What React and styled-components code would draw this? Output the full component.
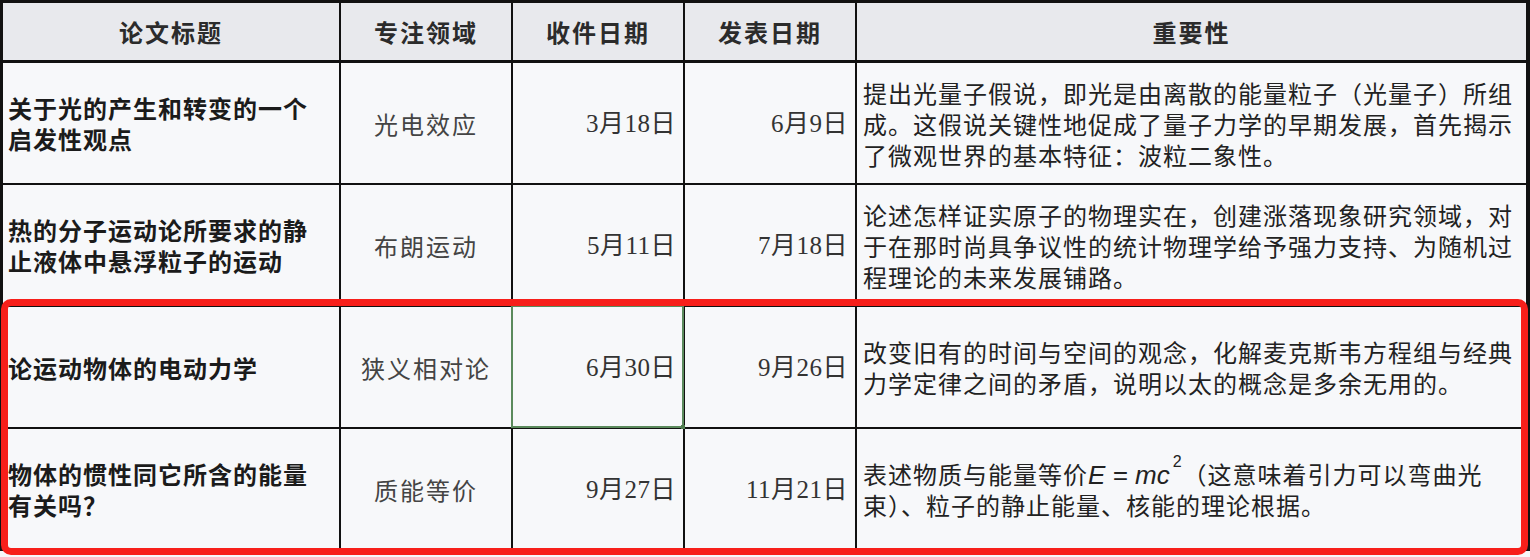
import React from "react";
import styled, { createGlobalStyle } from "styled-components";

const GlobalStyle = createGlobalStyle`
  body {
    margin: 0;
    background: #f7f8fa;
    font-family: "Noto Sans CJK SC", sans-serif;
  }
`;

const Sheet = styled.div`
  position: relative;
  width: 1530px;
  height: 557px;
  overflow: hidden;
  background: #f7f8fa;
`;

const Table = styled.div`
  display: grid;
  grid-template-columns: 338px 172px 172px 172px 1fr;
  grid-template-rows: 60px repeat(4, 122px);
  width: 1530px;
  box-sizing: border-box;
  border-top: 3px solid #111;
  border-left: 3px solid #111;
  border-right: 4px solid #111;
`;

const Cell = styled.div`
  position: relative;
  box-sizing: border-box;
  display: flex;
  align-items: center;
  justify-content: ${({ $align }) =>
    $align === "center" ? "center" : $align === "right" ? "flex-end" : "flex-start"};
  text-align: ${({ $align }) => $align || "left"};
  padding: 0 6px;
  border-right: ${({ $last }) => ($last ? "none" : "2px solid #111")};
  border-bottom: 2px solid #111;
  background: #f7f8fa;
  font-size: 24px;
  letter-spacing: 1px;
  line-height: 31px;
  color: #222;
`;

const HeadCell = styled(Cell)`
  background: #e8e9ed;
  border-bottom-width: 3px;
  font-weight: 600;
  color: #2b2b2b;
  letter-spacing: 2px;
`;

const TitleCell = styled(Cell)`
  padding: 0 16px 0 5px;
  font-weight: 700;
  color: #1b1b1b;
`;

const FieldCell = styled(Cell)`
  color: #444;
  letter-spacing: 2px;
`;

const DateCell = styled(Cell)`
  padding-right: 7px;
  font-family: "Liberation Serif", "Noto Sans CJK SC", serif;
  font-size: 25px;
  color: #333;
  letter-spacing: 0.5px;

  ${({ $selected }) =>
    $selected &&
    `
    &::before {
      content: "";
      position: absolute;
      left: -2px;
      top: -2px;
      right: -1px;
      bottom: -1px;
      border: 2px solid #5b8a5c;
      pointer-events: none;
    }
    &::after {
      content: "";
      position: absolute;
      right: -4px;
      bottom: -4px;
      width: 6px;
      height: 6px;
      background: #4f7d50;
    }
  `}
`;

const NoteCell = styled(Cell)`
  color: #222;
`;

const Formula = styled.span`
  font-family: "Liberation Sans", "DejaVu Sans", sans-serif;
  font-style: italic;
  font-size: 26px;
  line-height: 1;
  letter-spacing: 0;
  white-space: nowrap;
`;

const Sup = styled.span`
  display: inline-block;
  font-size: 16px;
  font-style: normal;
  line-height: 16px;
  vertical-align: top;
  margin: -4px 1px 0 3px;
`;

const Highlight = styled.div`
  position: absolute;
  left: 1px;
  top: 299px;
  width: 1527px;
  height: 256px;
  box-sizing: border-box;
  border: 7px solid #f71f1a;
  border-radius: 10px;
  pointer-events: none;
`;

const headers = ["论文标题", "专注领域", "收件日期", "发表日期", "重要性"];

const papers = [
  {
    title: "关于光的产生和转变的一个启发性观点",
    field: "光电效应",
    received: "3月18日",
    published: "6月9日",
    note: "提出光量子假说，即光是由离散的能量粒子（光量子）所组成。这假说关键性地促成了量子力学的早期发展，首先揭示了微观世界的基本特征：波粒二象性。",
  },
  {
    title: "热的分子运动论所要求的静止液体中悬浮粒子的运动",
    field: "布朗运动",
    received: "5月11日",
    published: "7月18日",
    note: "论述怎样证实原子的物理实在，创建涨落现象研究领域，对于在那时尚具争议性的统计物理学给予强力支持、为随机过程理论的未来发展铺路。",
  },
  {
    title: "论运动物体的电动力学",
    field: "狭义相对论",
    received: "6月30日",
    published: "9月26日",
    note: "改变旧有的时间与空间的观念，化解麦克斯韦方程组与经典力学定律之间的矛盾，说明以太的概念是多余无用的。",
    selected: true,
  },
  {
    title: "物体的惯性同它所含的能量有关吗？",
    field: "质能等价",
    received: "9月27日",
    published: "11月21日",
    note: (
      <span>
        表述物质与能量等价
        <Formula>
          E = mc<Sup>2</Sup>
        </Formula>
        （这意味着引力可以弯曲光束）、粒子的静止能量、核能的理论根据。
      </span>
    ),
  },
];

export default function App() {
  return (
    <>
      <GlobalStyle />
      <Sheet>
        <Table>
          {headers.map((h, i) => (
            <HeadCell key={h} $align="center" $last={i === headers.length - 1}>
              {h}
            </HeadCell>
          ))}
          {papers.map((p) => (
            <React.Fragment key={p.title}>
              <TitleCell>{p.title}</TitleCell>
              <FieldCell $align="center">{p.field}</FieldCell>
              <DateCell $align="right" $selected={p.selected}>
                {p.received}
              </DateCell>
              <DateCell $align="right">{p.published}</DateCell>
              <NoteCell $last>{p.note}</NoteCell>
            </React.Fragment>
          ))}
        </Table>
        <Highlight />
      </Sheet>
    </>
  );
}
